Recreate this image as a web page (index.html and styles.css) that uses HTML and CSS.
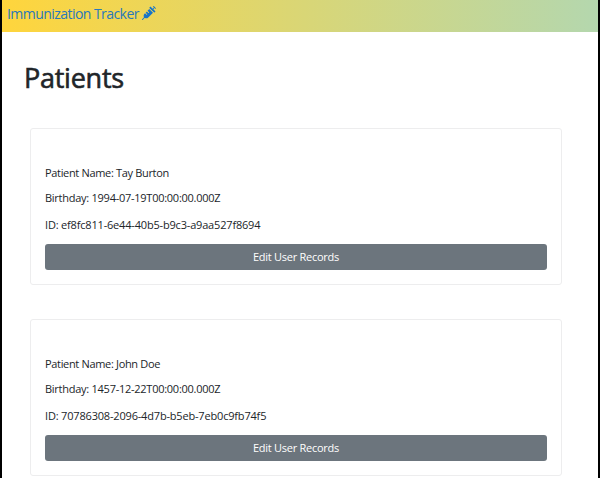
FILE: index.html
```html
<!DOCTYPE html>
<html lang="en">
<head>
<meta charset="utf-8">
<title>Immunization Tracker</title>
<link rel="stylesheet" href="styles.css">
</head>
<body>
<header class="navbar">
  <a class="brand"><span class="brand-name">Immunization Tracker</span>
    <svg class="syringe" viewBox="0 0 512 512" aria-hidden="true"><path d="M201.500 174.800l55.700 55.800c3.100 3.100 3.100 8.200 0 11.300l-11.300 11.300c-3.100 3.100-8.200 3.100-11.300 0l-55.700-55.800-45.300 45.300 55.800 55.800c3.100 3.100 3.100 8.200 0 11.300l-11.300 11.300c-3.100 3.100-8.200 3.100-11.300 0L111 265.200l-26.400 26.400c-17.300 17.300-25.600 41.100-23 65.400l7.100 63.600L2.300 487c-3.100 3.100-3.100 8.200 0 11.300l11.300 11.300c3.100 3.100 8.200 3.100 11.300 0l66.300-66.300 63.600 7.100c23.900 2.600 47.900-5.400 65.400-23l181.900-181.900-135.700-135.700-64.900 65zm308.200-93.300L430.500 2.300c-3.100-3.100-8.200-3.100-11.300 0l-11.300 11.300c-3.100 3.100-3.100 8.200 0 11.300l28.300 28.300-45.300 45.300-56.600-56.600-17-17c-3.100-3.100-8.200-3.100-11.300 0l-33.900 33.900c-3.100 3.100-3.100 8.200 0 11.300l17 17L424.800 223l17 17c3.100 3.100 8.200 3.100 11.300 0l33.900-34c3.100-3.100 3.100-8.200 0-11.300l-73.500-73.500 45.300-45.300 28.300 28.300c3.100 3.100 8.200 3.100 11.300 0l11.300-11.300c3.100-3.200 3.100-8.200 0-11.400z"/></svg>
  </a>
</header>
<main class="content">
  <h1>Patients</h1>
  <section class="card">
    <p class="name">Patient Name: Tay Burton</p>
    <p class="birthday">Birthday: 1994-07-19T00:00:00.000Z</p>
    <p class="record-id">ID: ef8fc811-6e44-40b5-b9c3-a9aa527f8694</p>
    <button type="button">Edit User Records</button>
  </section>
  <section class="card">
    <p class="name">Patient Name: John Doe</p>
    <p class="birthday">Birthday: 1457-12-22T00:00:00.000Z</p>
    <p class="record-id">ID: 70786308-2096-4d7b-b5eb-7eb0c9fb74f5</p>
    <button type="button">Edit User Records</button>
  </section>
</main>
</body>
</html>
```
FILE: styles.css
```css
* { box-sizing: border-box; }
html { background: #fff; }
body {
  margin: 0;
  height: 478px;
  overflow: hidden;
  border-left: 2px solid #000;
  border-right: 2px solid #000;
  background: #fff;
  color: #212529;
  font-family: "Open Sans", "Noto Sans", sans-serif;
  font-size: 11px;
}
.navbar {
  height: 32px;
  padding-left: 5px;
  background: linear-gradient(to right, #ffd53c, #b4d7ae);
}
.brand {
  display: flex;
  align-items: center;
  gap: 3px;
  height: 26px;
  color: #2878bb;
  font-size: 14px;
  letter-spacing: -0.550px;
  white-space: nowrap;
}
.syringe { width: 14px; height: 14px; fill: #1674c8; }
.content { height: 446px; overflow: hidden; padding: 0 36px 0 28px; }
h1 {
  margin: 0 0 0 -6px;
  height: 96px;
  padding-top: 26px;
  font-size: 27px;
  line-height: 40px;
  font-weight: 400;
  letter-spacing: -0.250px;
  -webkit-text-stroke: 0.600px #212529;
}
.card {
  height: 157px;
  margin-bottom: 34px;
  padding: 35px 14px 0;
  border: 1px solid #ededee;
  border-radius: 3px;
  white-space: nowrap;
}
.card:last-child { margin-bottom: 0; }
.card p { margin: 0; line-height: 18px; }
.card .name { letter-spacing: -0.330px; }
.card .birthday { margin-top: 7px; letter-spacing: -0.260px; }
.card .record-id { margin-top: 9px; letter-spacing: -0.180px; }
.card button {
  display: block;
  width: 100%;
  height: 26px;
  margin-top: 10px;
  padding: 0 0 1px;
  border: 0;
  border-radius: 3px;
  background: #6c757d;
  color: #fff;
  font: inherit;
  letter-spacing: -0.270px;
}
```
